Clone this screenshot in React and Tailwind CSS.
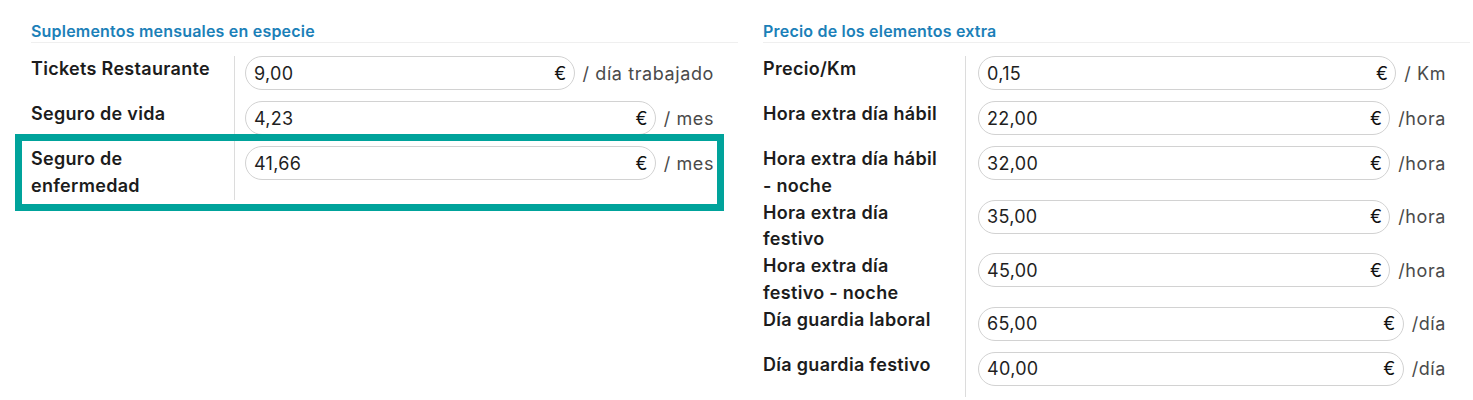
import React from "react";

const leftRows = [
  { label: ["Tickets Restaurante"], value: "9,00", suffix: "/ día trabajado" },
  { label: ["Seguro de vida"], value: "4,23", suffix: "/ mes" },
  { label: ["Seguro de", "enfermedad"], value: "41,66", suffix: "/ mes", highlight: true },
];

const rightRows = [
  { label: ["Precio/Km"], value: "0,15", suffix: "/ Km" },
  { label: ["Hora extra día hábil"], value: "22,00", suffix: "/hora" },
  { label: ["Hora extra día hábil", "- noche"], value: "32,00", suffix: "/hora" },
  { label: ["Hora extra día", "festivo"], value: "35,00", suffix: "/hora" },
  { label: ["Hora extra día", "festivo - noche"], value: "45,00", suffix: "/hora" },
  { label: ["Día guardia laboral"], value: "65,00", suffix: "/día" },
  { label: ["Día guardia festivo"], value: "40,00", suffix: "/día" },
];

function Row({ row, labelW, gapL }) {
  return (
    <div className="relative flex items-stretch">
      {row.highlight && (
        <div className="pointer-events-none absolute -top-[12px] -left-[16px] -right-[10px] -bottom-[11px] border-[7px] border-[#00a39b]" />
      )}
      <div
        className={`${labelW} shrink-0 border-r border-[#dcdcdc] text-[18px] font-semibold leading-[26.8px] tracking-[0.3px] text-[#1c1c1c]`}
      >
        {row.label.map((l, i) => (
          <div key={i} className="whitespace-nowrap">{l}</div>
        ))}
      </div>
      <div className={`flex min-h-[45px] flex-1 items-start ${gapL}`}>
        <div className="flex h-[34px] flex-1 items-center rounded-full border border-[#d2d2d2] pl-[8px] pr-[7px] text-[18px] tracking-[0.3px] text-[#1f1f1f]">
          <span className="flex-1">{row.value}</span>
          <span className="text-[#111]">€</span>
        </div>
        <div className="ml-[8px] flex h-[34px] items-center whitespace-nowrap text-[18px] tracking-[0.6px] text-[#4a4a4a]">
          {row.suffix}
        </div>
      </div>
    </div>
  );
}

function Section({ title, rows, className, labelW, gapL }) {
  return (
    <div className={className}>
      <div className="h-[23px] border-b border-[#efefef] text-[16px] font-semibold leading-[23px] tracking-[0.2px] text-[#1b80b8]">
        {title}
      </div>
      <div className="mt-[13px] pr-[24px]">
        {rows.map((r, i) => (
          <Row key={i} row={r} labelW={labelW} gapL={gapL} />
        ))}
      </div>
    </div>
  );
}

export default function App() {
  return (
    <div
      className="flex h-[400px] w-[1473px] overflow-hidden bg-white pt-[20px]"
      style={{ fontFamily: "Inter, 'Noto Sans', sans-serif" }}
    >
      <Section
        title="Suplementos mensuales en especie"
        rows={leftRows}
        className="ml-[31px] w-[707px] shrink-0"
        labelW="w-[204px]"
        gapL="pl-[10px]"
      />
      <Section
        title="Precio de los elementos extra"
        rows={rightRows}
        className="ml-[25px] w-[707px] shrink-0"
        labelW="w-[203px]"
        gapL="pl-[12px]"
      />
    </div>
  );
}
